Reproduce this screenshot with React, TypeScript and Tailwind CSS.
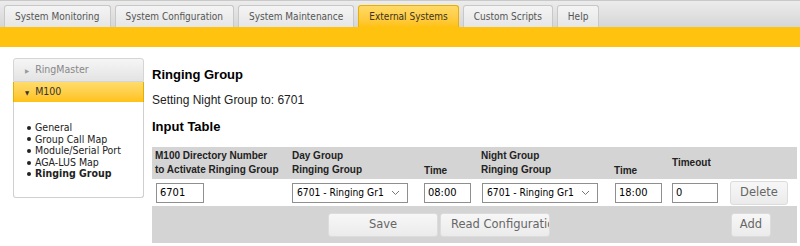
const tabs = [
  "System Monitoring",
  "System Configuration",
  "System Maintenance",
  "External Systems",
  "Custom Scripts",
  "Help",
];

const menuItems = [
  "General",
  "Group Call Map",
  "Module/Serial Port",
  "AGA-LUS Map",
  "Ringing Group",
];

const verdana = "font-['DejaVu_Sans_Condensed','DejaVu_Sans',Verdana,sans-serif]";
const wide = "font-['DejaVu_Sans',Verdana,sans-serif]";
const arial = "font-['Liberation_Sans',Arial,sans-serif]";

function Btn({ label, className }: { label: string; className: string }) {
  return (
    <button
      className={`h-[24px] overflow-hidden whitespace-nowrap rounded-[3px] border border-[#dcdcdc] bg-gradient-to-b from-[#f7f7f7] to-[#ebebeb] text-[11.5px] text-[#666] ${wide} ${className}`}
    >
      {label}
    </button>
  );
}

function TextBox({ value, className }: { value: string; className: string }) {
  return (
    <div
      className={`h-[20px] border border-[#8f8f8f] bg-white px-[3px] text-[11px] leading-[18px] text-black ${verdana} ${className}`}
    >
      {value}
    </div>
  );
}

function SelectBox({ className }: { className: string }) {
  return (
    <div
      className={`flex h-[20px] items-center justify-between whitespace-nowrap border border-[#8f8f8f] bg-white pl-[4px] pr-[7px] text-[10.2px] text-black ${verdana} ${className}`}
    >
      <span>6701 - Ringing Gr1</span>
      <svg width="9" height="6" viewBox="0 0 9 6">
        <path d="M1 1 L4.5 4.5 L8 1" fill="none" stroke="#777" strokeWidth="1" />
      </svg>
    </div>
  );
}

export default function App() {
  return (
    <div className="h-[246px] w-[800px] overflow-hidden bg-white">
      <div className="flex h-[27px] items-end gap-[4px] border-t border-[#c9c9c9] bg-gradient-to-b from-[#ececec] to-[#d6d6d6] pl-[4px]">
        {tabs.map((t) => {
          const active = t === "External Systems";
          return (
            <div
              key={t}
              className={`flex h-[22px] items-center rounded-t-[3px] border border-b-0 px-[10px] text-[10px] ${verdana} ${
                active
                  ? "border-[#e8b000] bg-gradient-to-b from-[#ffd966] to-[#ffc20f] text-[#3a3320]"
                  : "border-[#c8c8c8] bg-gradient-to-b from-[#f4f4f4] to-[#e6e6e6] text-[#555]"
              }`}
            >
              {t}
            </div>
          );
        })}
      </div>
      <div className="h-[20px] bg-[#ffc20f]" />

      <div className="flex pt-[11px]">
        <div className="ml-[13px] w-[131px] shrink-0">
          <div
            className={`flex h-[24px] items-center gap-[6px] rounded-t-[3px] border border-[#d5d5d5] bg-gradient-to-b from-[#f6f6f6] to-[#e3e3e3] pl-[11px] text-[10.5px] text-[#888] ${verdana}`}
          >
            <span className="text-[6px] text-[#999]">▶</span>
            RingMaster
          </div>
          <div
            className={`flex h-[20px] items-center gap-[6px] border-x border-[#e3b000] bg-gradient-to-b from-[#ffdc6a] to-[#ffc20f] pl-[11px] text-[10.5px] text-[#333] ${verdana}`}
          >
            <span className="text-[6px] text-[#333]">▼</span>
            M100
          </div>
          <div className="h-[96px] rounded-b-[3px] border border-t-0 border-[#cfcfcf] pl-[13px] pt-[20px]">
            <ul className={`text-[10.5px] leading-[11.6px] text-[#222] ${verdana}`}>
              {menuItems.map((m) => (
                <li key={m} className={`flex items-center gap-[4px] ${m === "Ringing Group" ? "font-bold" : ""}`}>
                  <span className="h-[4px] w-[4px] rounded-full bg-[#222]" />
                  {m}
                </li>
              ))}
            </ul>
          </div>
        </div>

        <div className={`ml-[8px] flex-1 ${arial}`}>
          <h2 className="mt-[9px] text-[13px] font-bold leading-[16px] text-black">Ringing Group</h2>
          <p className="mt-[10px] text-[12px] leading-[14px] text-[#222]">Setting Night Group to: 6701</p>
          <h2 className="mt-[12px] text-[13px] font-bold leading-[16px] text-black">Input Table</h2>

          <div className="mt-[12px] w-[645px]">
            <div className="flex h-[32px] bg-[#d4d4d4] text-[10px] font-bold leading-[14px] text-[#222]">
              <div className="w-[140px] pl-[3px] pt-[2px]">
                M100 Directory Number
                <br />
                to Activate Ringing Group
              </div>
              <div className="w-[132px] pt-[2px]">
                Day Group
                <br />
                Ringing Group
              </div>
              <div className="flex w-[57px] items-end pb-[1px]">Time</div>
              <div className="w-[133px] pt-[2px]">
                Night Group
                <br />
                Ringing Group
              </div>
              <div className="flex w-[58px] items-end pb-[1px]">Time</div>
              <div className="flex items-center">Timeout</div>
            </div>

            <div className="flex h-[27px] items-center">
              <TextBox value="6701" className="ml-[4px] w-[48px]" />
              <SelectBox className="ml-[88px] w-[116px]" />
              <TextBox value="08:00" className="ml-[16px] w-[47px]" />
              <SelectBox className="ml-[11px] w-[116px]" />
              <TextBox value="18:00" className="ml-[17px] w-[47px]" />
              <TextBox value="0" className="ml-[10px] w-[46px]" />
              <Btn label="Delete" className="ml-[12px] w-[58px]" />
            </div>

            <div className="flex h-[37px] items-center bg-[#d4d4d4]">
              <Btn label="Save" className="ml-[176px] w-[110px]" />
              <Btn label="Read Configuration" className="ml-[2px] w-[110px] pl-[10px] text-left" />
              <Btn label="Add" className="ml-[181px] w-[40px]" />
            </div>
          </div>
        </div>
      </div>
    </div>
  );
}
